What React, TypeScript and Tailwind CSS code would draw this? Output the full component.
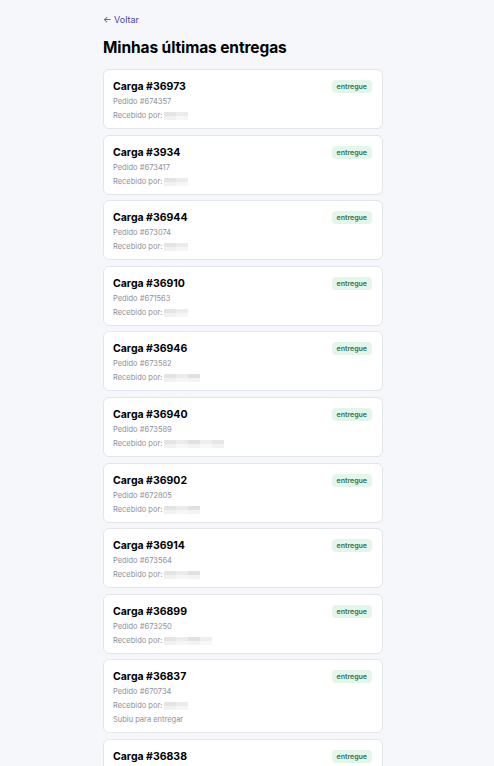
const entregas = [
  { carga: '36973', pedido: '674357', nome: 2 },
  { carga: '3934', pedido: '673417', nome: 2 },
  { carga: '36944', pedido: '673074', nome: 2 },
  { carga: '36910', pedido: '671563', nome: 2 },
  { carga: '36946', pedido: '673582', nome: 3 },
  { carga: '36940', pedido: '673589', nome: 5 },
  { carga: '36902', pedido: '672805', nome: 3 },
  { carga: '36914', pedido: '673564', nome: 3 },
  { carga: '36899', pedido: '673250', nome: 4 },
  { carga: '36837', pedido: '670734', nome: 2, obs: 'Subiu para entregar' },
  { carga: '36838', pedido: '670735', nome: 2 },
];

const tons = ['bg-[#e4e4e4]', 'bg-[#ebebeb]', 'bg-[#e1e1e1]', 'bg-[#eeeeee]', 'bg-[#e6e6e6]'];
const tonsBaixo = ['bg-[#f1f1f1]', 'bg-[#f6f6f6]', 'bg-[#f3f3f3]', 'bg-[#f8f8f8]', 'bg-[#f2f2f2]'];

function NomeBorrado({ blocos }: { blocos: number }) {
  // nome do recebedor aparece pixelado na tela
  return (
    <span className="inline-flex flex-col align-middle">
      <span className="flex">
        {Array.from({ length: blocos }).map((_, i) => (
          <span key={i} className={`w-[12px] h-[4px] ${tons[i % tons.length]}`} />
        ))}
      </span>
      <span className="flex">
        {Array.from({ length: blocos }).map((_, i) => (
          <span key={i} className={`w-[12px] h-[4px] ${tonsBaixo[i % tonsBaixo.length]}`} />
        ))}
      </span>
    </span>
  );
}

export default function App() {
  return (
    <div className="min-h-screen bg-[#f6f7fb] font-['Inter',sans-serif] text-black">
      <div className="w-[280px] ml-[103px] pt-[14px]">
        <a className="block text-[9px] leading-[12px] text-[#4a43a3]">← Voltar</a>
        <h1 className="mt-[12px] text-[15.5px] leading-[20px] font-bold tracking-[-0.1px]">
          Minhas últimas entregas
        </h1>

        <div className="mt-[11px] flex flex-col gap-[5.6px]">
          {entregas.map((e) => (
            <div
              key={e.carga}
              className="bg-white border border-[#e3e5ea] rounded-[6px] pl-[9px] pr-[10px] pt-[9px] pb-[5px]"
            >
              <div className="flex items-start justify-between">
                <div className="text-[10.5px] leading-[16px] font-bold">Carga #{e.carga}</div>
                <span className="mt-[1px] rounded-[4px] bg-[#e4f6ea] px-[5px] h-[13px] leading-[13px] text-[7px] font-semibold text-[#2f7350]">
                  entregue
                </span>
              </div>
              <div className="text-[7.5px] leading-[14px] text-[#8d8f99]">Pedido #{e.pedido}</div>
              <div className="text-[7.5px] leading-[14px] text-[#8d8f99] flex items-center gap-[2px]">
                Recebido por: <NomeBorrado blocos={e.nome} />
              </div>
              {e.obs && (
                <div className="text-[7.5px] leading-[14px] text-[#8d8f99]">{e.obs}</div>
              )}
            </div>
          ))}
        </div>
      </div>
    </div>
  );
}
